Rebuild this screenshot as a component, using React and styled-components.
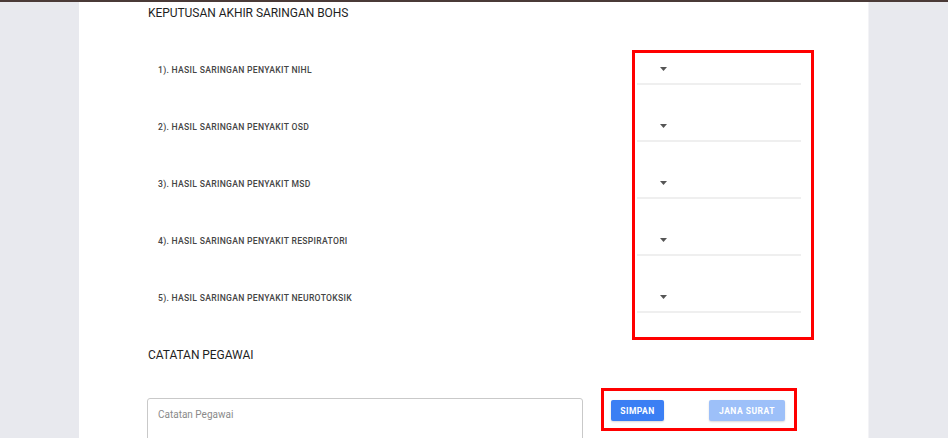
import styled, { createGlobalStyle } from "styled-components";

const GlobalStyle = createGlobalStyle`
  html, body {
    margin: 0;
    padding: 0;
    height: 100%;
    overflow: hidden;
    background: #e8e9ee;
    font-family: Roboto, "Liberation Sans", Arial, sans-serif;
  }
  * { box-sizing: border-box; }
`;

const Page = styled.div`
  width: 948px;
  height: 438px;
  overflow: hidden;
  border-top: 2px solid #4a3a37;
  display: flex;
`;

const Side = styled.div`
  width: 79px;
  flex-shrink: 0;
  background: #e8e9ee;
`;

const Main = styled.main`
  flex: 1;
  background: #ffffff;
  padding: 3px 54px 0 69px;
  border-right: 1px solid #f3f3f6;
`;

const Heading = styled.h2`
  margin: ${(p) => p.$mt || 0}px 0 0;
  font-size: 12px;
  line-height: 16px;
  font-weight: 400;
  letter-spacing: -0.05px;
  color: #1f1f1f;
`;

const FormRow = styled.div`
  display: flex;
  align-items: flex-start;
  margin-top: 29px;
`;

const Labels = styled.div`
  flex: 1;
  padding: 4px 0 0 10px;
  display: flex;
  flex-direction: column;
  gap: 26px;
`;

const Label = styled.div`
  height: 31px;
  display: flex;
  align-items: center;
  font-size: 8.6px;
  font-weight: 500;
  color: #454545;
  letter-spacing: 0.3px;
`;

const Highlight = styled.div`
  border: 3px solid #ff0000;
  width: ${(p) => p.$w}px;
  padding: ${(p) => p.$pad};
  display: flex;
  flex-direction: ${(p) => (p.$col ? "column" : "row")};
  gap: ${(p) => p.$gap}px;
`;

const Select = styled.div`
  height: 31px;
  margin: 0 10px 0 2px;
  border-bottom: 2px solid #efefef;
  display: flex;
  align-items: center;
  padding: 1px 0 0 23px;
`;

const NoteRow = styled.div`
  display: flex;
  align-items: flex-start;
  gap: 18px;
  margin-top: 25px;
  margin-left: -1px;
`;

const TextArea = styled.textarea`
  width: 436px;
  height: 60px;
  flex-shrink: 0;
  margin-top: 10px;
  border: 1px solid #c9c9c9;
  border-radius: 3px;
  padding: 10px;
  resize: none;
  font-family: Roboto, "Liberation Sans", Arial, sans-serif;
  font-size: 10px;
  color: #333;
  &::placeholder {
    color: #8a8a8a;
  }
`;

const Button = styled.button`
  height: 21px;
  padding: 0;
  width: ${(p) => p.$w}px;
  border: none;
  border-radius: 2px;
  background: ${(p) => (p.$disabled ? "#9dc0f9" : "#3b7ff4")};
  color: #ffffff;
  font-family: Roboto, "Liberation Sans", Arial, sans-serif;
  font-size: 8.5px;
  font-weight: 700;
  letter-spacing: 0.5px;
  box-shadow: 0 1px 2px rgba(0, 0, 0, 0.15);
`;

const Arrow = () => (
  <svg width="7" height="4" viewBox="0 0 7 4">
    <path d="M0 0h7L3.5 4z" fill="#555" />
  </svg>
);

const items = [
  "1). HASIL SARINGAN PENYAKIT NIHL",
  "2). HASIL SARINGAN PENYAKIT OSD",
  "3). HASIL SARINGAN PENYAKIT MSD",
  "4). HASIL SARINGAN PENYAKIT RESPIRATORI",
  "5). HASIL SARINGAN PENYAKIT NEUROTOKSIK",
];

export default function App() {
  return (
    <>
      <GlobalStyle />
      <Page>
        <Side />
        <Main>
          <Heading>KEPUTUSAN AKHIR SARINGAN BOHS</Heading>
          <FormRow>
            <Labels>
              {items.map((t) => (
                <Label key={t}>{t}</Label>
              ))}
            </Labels>
            <Highlight $w={182} $pad="1px 0 24px 0" $col $gap={26}>
              {items.map((t) => (
                <Select key={t}>
                  <Arrow />
                </Select>
              ))}
            </Highlight>
          </FormRow>
          <Heading $mt={7}>CATATAN PEGAWAI</Heading>
          <NoteRow>
            <TextArea placeholder="Catatan Pegawai" />
            <Highlight $w={196} $pad="9px 9px 7px 7px" $gap={45}>
              <Button $w={53}>SIMPAN</Button>
              <Button $w={76} $disabled>
                JANA SURAT
              </Button>
            </Highlight>
          </NoteRow>
        </Main>
        <Side />
      </Page>
    </>
  );
}
